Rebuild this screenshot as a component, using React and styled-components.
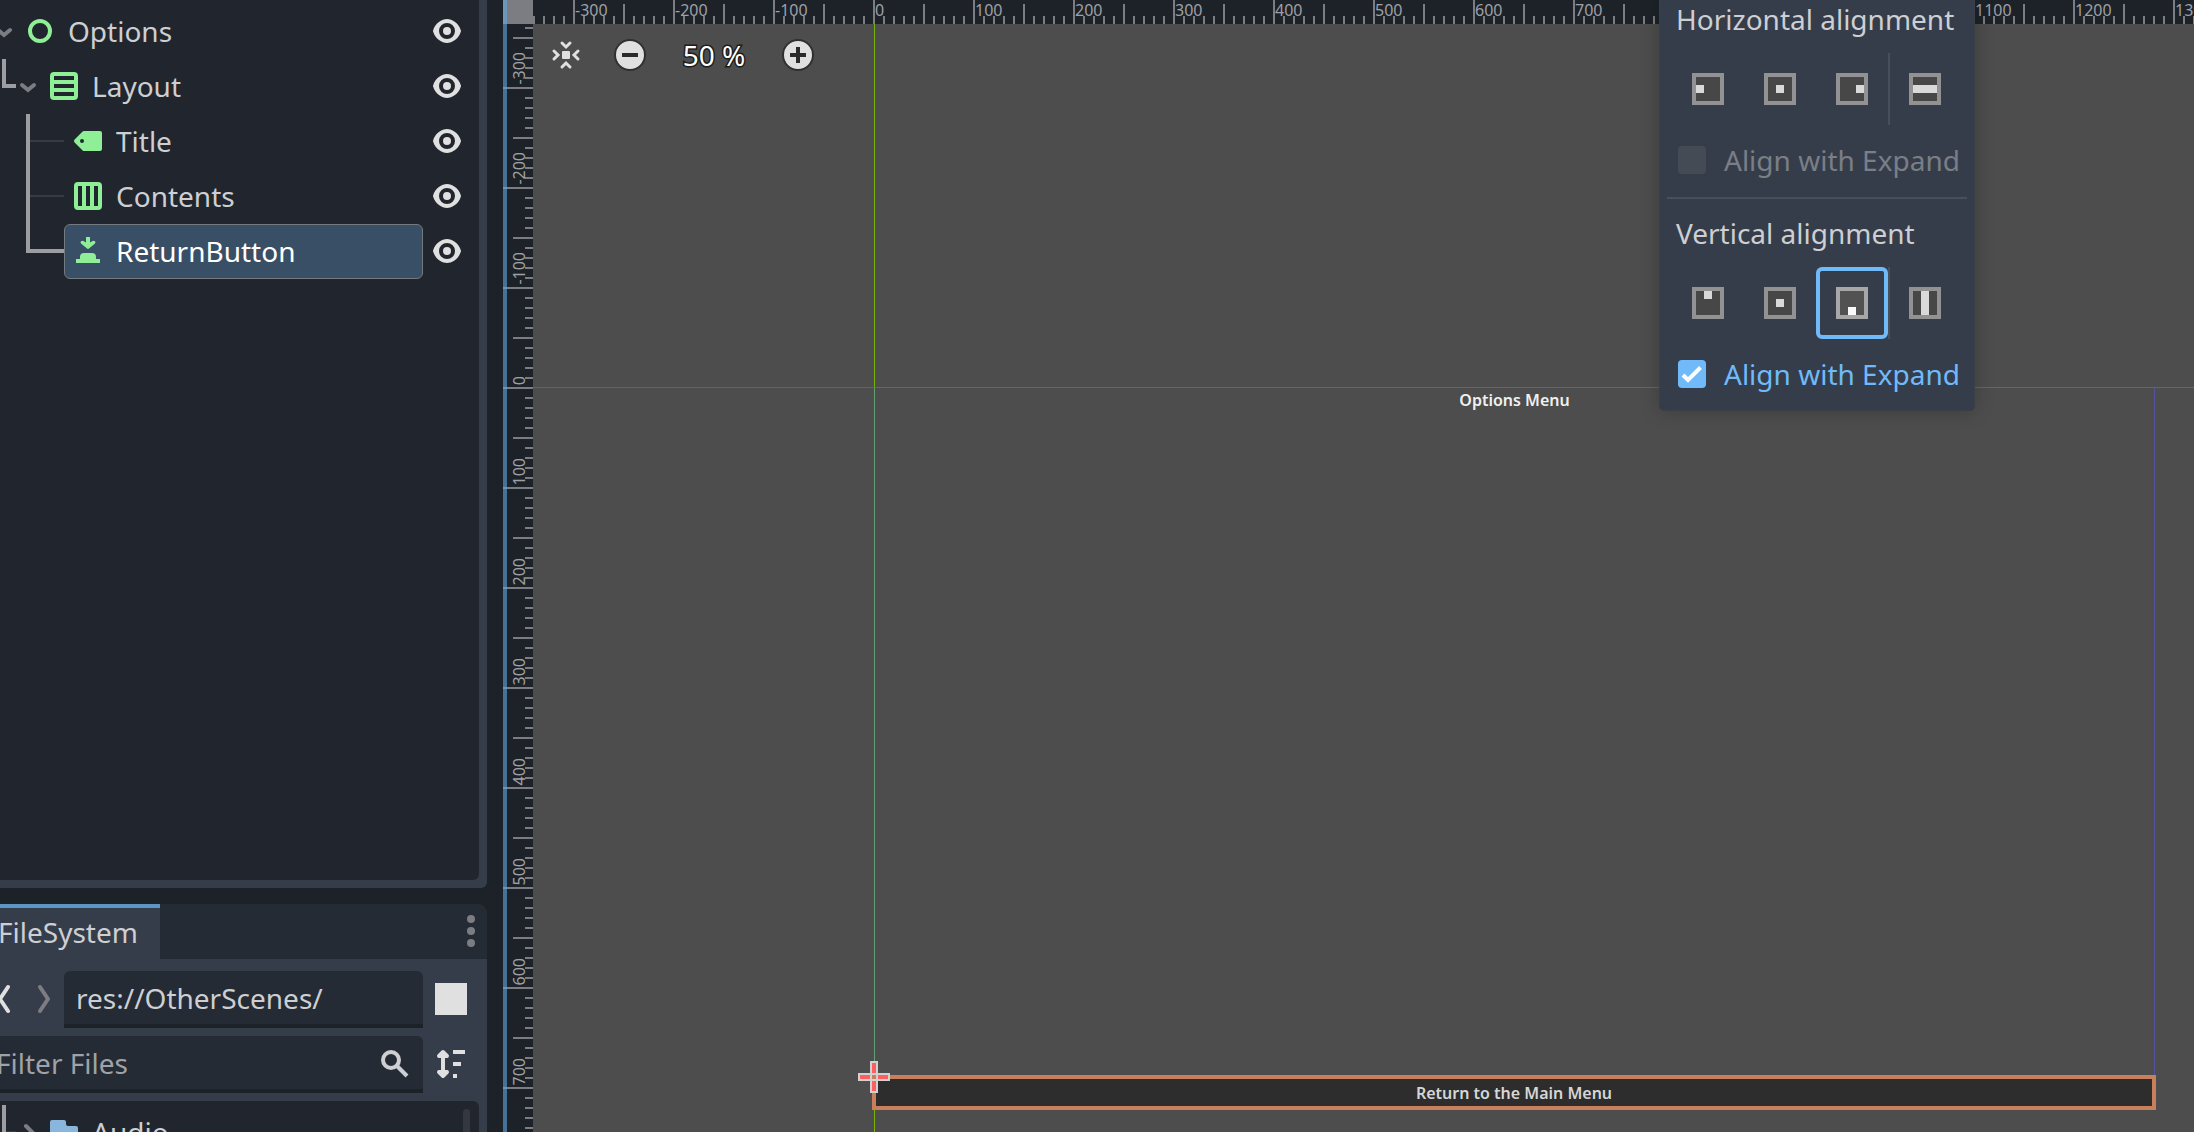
import React from "react";
import styled, { createGlobalStyle, css } from "styled-components";

const color = {
  base: "#363d4a",
  dark: "#1d2229",
  panel: "#21262e",
  field: "#252b34",
  text: "#cdcfd2",
  muted: "#7b7d82",
  icon: "#e0e0e0",
  green: "#8eef97",
  accent: "#70bafa",
  line: "#9c9ea3",
  thin: "#373c44",
};

const GlobalStyle = createGlobalStyle`
  * { box-sizing: border-box; }
  body {
    margin: 0;
    overflow: hidden;
    background: ${color.dark};
    color: ${color.text};
    font: 28px/38px "Noto Sans", sans-serif;
  }
  button, input { font: inherit; color: inherit; }
  svg { display: block; flex: none; }
`;

const Editor = styled.div`
  display: flex;
  height: 100vh;
  overflow: hidden;
`;

const Docks = styled.aside`
  display: grid;
  grid-template-rows: minmax(0, 1fr) 228px;
  gap: 16px;
  flex: none;
  width: 513px;
  margin-left: -26px;
`;

const SceneDock = styled.section`
  display: flex;
  padding: 0 8px 8px 0;
  background: ${color.base};
  border-radius: 0 0 6px 0;
`;

const Tree = styled.ul`
  flex: 1;
  margin: 0;
  padding: 4px 8px 0 0;
  list-style: none;
  background: ${color.panel};
  border-radius: ${(p) => (p.$roundTop ? "0 6px 0 0" : "0 0 6px 0")};
`;

const TreeRow = styled.li`
  display: flex;
  height: 55px;
  padding-left: ${(p) => [18, 28, 52][p.$level]}px;
`;

const thickTrunk = (end) =>
  `linear-gradient(${color.line}, ${color.line}) 0 0 / 4px ${end} no-repeat`;
const branch = (tone, top, size) =>
  `linear-gradient(${tone}, ${tone}) 0 ${top} / 100% ${size} no-repeat`;

const Guide = styled.span`
  flex: none;
  width: ${(p) => (p.$wide ? 38 : 14)}px;
  background: ${(p) =>
    p.$last
      ? `${thickTrunk("29px")}, ${branch(color.line, "25px", "4px")}`
      : `${thickTrunk("100%")}, ${branch(color.thin, "26px", "2px")}`};
`;

const PlainButton = styled.button`
  display: flex;
  align-items: center;
  justify-content: center;
  flex: none;
  padding: 0;
  border: 0;
  background: none;
`;

const Fold = styled(PlainButton)`
  width: 24px;
  height: 54px;
`;

const Item = styled.button`
  display: flex;
  flex: 1;
  align-items: center;
  gap: 12px;
  min-width: 0;
  padding: 7px 7px 8px;
  border: 1px solid transparent;
  border-radius: 6px;
  background: none;
  text-align: left;
  ${(p) =>
    p.$selected &&
    css`
      background: #394f66;
      border-color: #74787f;
      color: #fff;
    `}
`;

const EyeButton = styled(PlainButton)`
  width: 48px;
  height: 54px;
`;

const FileDock = styled.section`
  display: flex;
  flex-direction: column;
  overflow: hidden;
  background: ${color.base};
  border-radius: 0 10px 0 0;
`;

const TabBar = styled.div`
  display: flex;
  justify-content: space-between;
  background: ${color.field};
`;

const Tab = styled.button`
  height: 55px;
  padding: 3px 22px 6px 24px;
  border: 0;
  border-top: 4px solid #5b94c7;
  background: ${color.base};
`;

const MenuButton = styled(PlainButton)`
  width: 32px;
  height: 54px;
`;

const DockBody = styled.div`
  display: flex;
  flex-direction: column;
  flex: 1;
  gap: 8px;
  min-height: 0;
  padding: 12px 8px 0 10px;
`;

const FieldRow = styled.div`
  display: flex;
  flex: none;
`;

const NavButton = styled(PlainButton)`
  width: 40px;
  height: 56px;
`;

const SideButton = styled(PlainButton)`
  width: 56px;
  height: 56px;
`;

const Field = styled.label`
  display: flex;
  flex: 1;
  align-items: flex-start;
  min-width: 0;
  padding: 0 12px;
  background: ${color.field};
  border-bottom: 4px solid ${color.dark};
  border-radius: 6px 6px 0 0;
  svg {
    margin-top: 12px;
  }
`;

const TextInput = styled.input`
  flex: 1;
  min-width: 0;
  height: 53px;
  padding: 0;
  border: 0;
  outline: 0;
  background: none;
  &::placeholder {
    color: #9fa2a6;
    opacity: 1;
  }
`;

const Square = styled.span`
  width: 32px;
  height: 32px;
  background: ${color.icon};
`;

const FileSlot = styled.div`
  display: flex;
  flex: none;
  height: 31px;
  padding-right: 8px;
`;

const FileList = styled.div`
  display: flex;
  flex: 1;
  min-height: 0;
  overflow: hidden;
  background: ${color.panel};
  border-radius: 0 6px 0 0;
`;

const ScrollThumb = styled.span`
  flex: none;
  width: 7px;
  margin: 8px 9px 0 0;
  border-radius: 4px 4px 0 0;
  background: #34373e;
`;

/* The viewport: two rulers around the canvas */

const View = styled.main`
  display: grid;
  flex: 1;
  grid-template: 24px minmax(0, 1fr) / 30px minmax(0, 1fr);
  min-width: 0;
  margin-left: 16px;
  position: relative;
`;

const FocusEdge = styled.span`
  position: absolute;
  inset: 0 auto 0 0;
  width: 4px;
  background: rgba(98, 168, 229, 0.6);
`;

const Corner = styled.div`
  background: ${color.muted};
`;

const bar = (size, pos) =>
  `linear-gradient(${color.muted}, ${color.muted}) ${pos} / ${size} no-repeat`;

const TopRuler = styled.div`
  display: flex;
  overflow: hidden;
  background: ${color.dark};
  font-size: 16px;
  line-height: 20px;
  color: #9da0a4;
`;

const TopMark = styled.span`
  flex: none;
  width: 100px;
  height: 24px;
  padding-left: 2px;
  background: ${bar("2px 24px", "0 0")}, ${bar("2px 20px", "50px 4px")},
    linear-gradient(90deg, ${color.muted} 2px, transparent 2px) 0 16px / 10px 8px repeat-x;
  &:first-child {
    margin-left: -60px;
  }
`;

const SideRuler = styled.div`
  display: flex;
  flex-direction: column;
  overflow: hidden;
  background: ${color.dark};
  font-size: 16px;
  line-height: 20px;
  color: #9da0a4;
`;

const SideMark = styled.span`
  display: flex;
  flex: none;
  align-items: flex-end;
  height: 100px;
  padding: 0 0 2px 6px;
  background: ${bar("30px 2px", "0 0")}, ${bar("20px 2px", "10px 50px")},
    linear-gradient(${color.muted} 2px, transparent 2px) 22px 0 / 8px 10px repeat-y;
  &:first-child {
    margin-top: -37px;
  }
`;

const SideLabel = styled.span`
  writing-mode: vertical-rl;
  transform: rotate(180deg);
`;

const Canvas = styled.div`
  position: relative;
  overflow: hidden;
  background: #4d4d4d;
`;

const AxisX = styled.span`
  position: absolute;
  inset: 363px 0 auto;
  height: 1px;
  background: linear-gradient(90deg, #bb3a4b 341px, #dc323f 0);
`;

const AxisY = styled.span`
  position: absolute;
  inset: 0 auto 0 341px;
  width: 1px;
  background: #79b500;
`;

const Stage = styled.div`
  display: flex;
  flex-direction: column;
  justify-content: space-between;
  position: absolute;
  left: 341px;
  top: 363px;
  width: 1281px;
  height: 721px;
  padding-top: 1px;
  border: 1px solid #9c4390;
  border-left-color: #629f74;
  border-right-color: #5252a0;
  border-bottom: 0;
  font: 600 16px/22px "Noto Sans", sans-serif;
  text-align: center;
`;

const StageTitle = styled.span`
  color: #f0f0f0;
`;

const StageButton = styled.button`
  height: 35px;
  margin: 0 -2px -2px -3px;
  padding: 2px 0;
  border: 4px solid #c87f5c;
  background: #2d2d2d;
  color: #d6d6d6;
`;

const Handle = styled.svg`
  position: absolute;
  left: 325px;
  top: 1037px;
`;

const ZoomBar = styled.div`
  display: flex;
  align-items: center;
  position: absolute;
  left: 1px;
  top: 11px;
  height: 40px;
`;

const ZoomButton = styled(PlainButton)`
  width: 64px;
  height: 40px;
`;

const ZoomValue = styled(PlainButton)`
  width: 104px;
  height: 38px;
  color: #fff;
  -webkit-text-stroke: 3px #1c1c1c;
  paint-order: stroke fill;
`;

/* Alignment popup */

const Popup = styled.div`
  position: absolute;
  top: 0;
  right: 220px;
  width: 314px;
  padding-bottom: 17px;
  border-radius: 0 0 4px 4px;
  background: ${color.base};
  box-shadow: 0 0 0 1px #3a3f48, 0 0 20px rgba(0, 0, 0, 0.25);
`;

const Heading = styled.h2`
  margin: 0;
  padding: 0 16px;
  font: inherit;
  white-space: nowrap;
`;

const AlignRow = styled.div`
  display: flex;
  padding: 15px 12px 16px;
`;

const AlignButton = styled(PlainButton)`
  width: 72px;
  height: 72px;
  border-radius: 6px;
  ${(p) => p.$active && `border: 4px solid ${color.accent};`}
`;

const VLine = styled.span`
  width: 2px;
  margin-right: -1px;
  background: #484f5c;
`;

const HLine = styled.hr`
  height: 2px;
  margin: 18px 7px 15px;
  border: 0;
  background: #484f5c;
`;

const CheckLabel = styled.label`
  display: flex;
  align-items: center;
  gap: 18px;
  padding: 0 18px;
  white-space: nowrap;
  color: ${(p) => (p.$on ? color.accent : "#7a7e87")};
`;

const CheckBox = styled.span`
  display: grid;
  width: 28px;
  height: 28px;
  > * {
    grid-area: 1 / 1;
  }
`;

const CheckInput = styled.input`
  appearance: none;
  width: 28px;
  height: 28px;
  margin: 0;
  border-radius: 4px;
  background: #444b54;
  &:checked {
    background: ${color.accent};
  }
`;

/* Icons, drawn on a 16-unit grid */

const Icon = ({ children, fill = color.icon, size = 32 }) => (
  <svg width={size} height={size} viewBox="0 0 16 16" fill={fill} aria-hidden="true">
    {children}
  </svg>
);

const Eye = () => (
  <Icon>
    <path d="M8 2C5.443 2.01 2.134 4.06 1.045 7.7a1 1 0 0 0 0 .6C2.163 12.03 5.5 13.99 8 14c2.5-.01 5.837-1.97 6.955-5.7a1 1 0 0 0 0-.59C13.875 4.06 10.557 2.01 8 2zm0 2a4 4 0 1 1 0 8 4 4 0 0 1 0-8zm0 2a2 2 0 1 0 0 4 2 2 0 0 0 0-4z" />
  </Icon>
);

const nodeIcons = {
  control: (
    <Icon fill="none">
      <circle cx="8" cy="8" r="5" stroke={color.green} strokeWidth="2" />
    </Icon>
  ),
  vbox: (
    <Icon fill={color.green}>
      <path
        fillRule="evenodd"
        d="M3 1h10a2 2 0 0 1 2 2v10a2 2 0 0 1-2 2H3a2 2 0 0 1-2-2V3a2 2 0 0 1 2-2zm0 2v2h10V3zm0 4v2h10V7zm0 4v2h10v-2z"
      />
    </Icon>
  ),
  label: (
    <Icon fill={color.green}>
      <path
        fillRule="evenodd"
        d="M6 3a1 1 0 0 0-.7.3l-4 4a1 1 0 0 0 0 1.4l4 4a1 1 0 0 0 .7.3h8a1 1 0 0 0 1-1V4a1 1 0 0 0-1-1zM5 7a1 1 0 1 1 0 2 1 1 0 0 1 0-2z"
      />
    </Icon>
  ),
  hbox: (
    <Icon fill={color.green}>
      <path
        fillRule="evenodd"
        d="M3 1h10a2 2 0 0 1 2 2v10a2 2 0 0 1-2 2H3a2 2 0 0 1-2-2V3a2 2 0 0 1 2-2zm0 2v10h2V3zm4 0v10h2V3zm4 0v10h2V3z"
      />
    </Icon>
  ),
  button: (
    <Icon fill={color.green}>
      <path d="M7 1h2v2.8l1.3-.8a.9.9 0 0 1 1.2 1.3L8.500 6.800a.8.8 0 0 1-1 0L4.500 4.300A.9.9 0 0 1 5.700 3L7 3.800zM6 9h4a2 2 0 0 1 2 2v1h2v2H2v-2h2v-1a2 2 0 0 1 2-2z" />
    </Icon>
  ),
  folder: (
    <Icon fill="#88b6dd">
      <path d="M2 2h6a1 1 0 0 1 1 1v1a1 1 0 0 0 1 1h4a1 1 0 0 1 1 1v7a1 1 0 0 1-1 1H2a1 1 0 0 1-1-1V3a1 1 0 0 1 1-1z" />
    </Icon>
  ),
};

const FoldArrow = ({ closed }) => (
  <svg width="24" height="24" viewBox="0 0 24 24" fill="none" stroke={color.muted} strokeWidth="4" strokeLinecap="round" aria-hidden="true">
    <path d={closed ? "M10 6l6 6-6 6" : "M6 11l6 5 6-5"} />
  </svg>
);

const NavArrow = ({ forward }) => (
  <svg width="16" height="32" viewBox="0 0 16 32" fill="none" stroke={forward ? color.muted : color.icon} strokeWidth="4" strokeLinecap="round" strokeLinejoin="round" aria-hidden="true">
    <path d={forward ? "M4 4l8 12-8 12" : "M12 4L4 16l8 12"} />
  </svg>
);

const dots = {
  left: [4, 12, 8, 8],
  center: [12, 12, 8, 8],
  right: [20, 12, 8, 8],
  hfill: [4, 12, 24, 8],
  top: [12, 4, 8, 8],
  bottom: [12, 20, 8, 8],
  vfill: [12, 4, 8, 24],
};

const AlignIcon = ({ kind, active }) => {
  const [x, y, w, h] = dots[kind];
  return (
    <svg width="32" height="32" viewBox="0 0 32 32" aria-hidden="true">
      <rect width="32" height="32" fill={active ? "#a7a7a7" : "#929292"} />
      <rect x="4" y="4" width="24" height="24" fill={active ? "#525252" : "#474747"} />
      <rect x={x} y={y} width={w} height={h} fill={active ? "#fafafa" : "#d9d9d9"} />
    </svg>
  );
};

const RoundSign = ({ plus }) => (
  <svg width="32" height="32" viewBox="0 0 32 32" aria-hidden="true">
    <circle cx="16" cy="16" r="15" fill={color.icon} stroke="#303030" strokeWidth="2" />
    <path d={plus ? "M8 16h16M16 8v16" : "M8 16h16"} stroke="#2b2b2b" strokeWidth="4" />
  </svg>
);

const sceneNodes = [
  { name: "Options", icon: "control", level: 0, folds: true },
  { name: "Layout", icon: "vbox", level: 1, folds: true, last: true },
  { name: "Title", icon: "label", level: 2 },
  { name: "Contents", icon: "hbox", level: 2 },
  { name: "ReturnButton", icon: "button", level: 2, last: true, selected: true },
];

const Node = ({ node }) => (
  <TreeRow $level={node.level}>
    {node.level > 0 && <Guide $wide={node.level > 1} $last={node.last} />}
    {node.folds && (
      <Fold aria-label={`Fold ${node.name}`}>
        <FoldArrow closed={node.closed} />
      </Fold>
    )}
    <Item $selected={node.selected}>
      {nodeIcons[node.icon]}
      {node.name}
    </Item>
    {!node.closed && (
      <EyeButton aria-label={`Toggle ${node.name}`}>
        <Eye />
      </EyeButton>
    )}
  </TreeRow>
);

const AlignSection = ({ title, kinds, active, checked }) => (
  <section>
    <Heading>{title}</Heading>
    <AlignRow>
      {kinds.map((kind, i) => (
        <React.Fragment key={kind}>
          {i === 3 && <VLine />}
          <AlignButton aria-label={kind} $active={kind === active}>
            <AlignIcon kind={kind} active={kind === active} />
          </AlignButton>
        </React.Fragment>
      ))}
    </AlignRow>
    <CheckLabel $on={checked}>
      <CheckBox>
        <CheckInput type="checkbox" defaultChecked={checked} disabled={!checked} />
        {checked && (
          <svg width="28" height="28" viewBox="0 0 28 28" fill="none" stroke="#fff" strokeWidth="4" pointerEvents="none" aria-hidden="true">
            <path d="M5 15l5 5L22.500 7.500" />
          </svg>
        )}
      </CheckBox>
      Align with Expand
    </CheckLabel>
  </section>
);

const marks = (from, count) => Array.from({ length: count }, (_, i) => from + i * 100);

export default function App() {
  return (
    <Editor>
      <GlobalStyle />
      <Docks>
        <SceneDock>
          <Tree>
            {sceneNodes.map((n) => (
              <Node key={n.name} node={n} />
            ))}
          </Tree>
        </SceneDock>
        <FileDock>
          <TabBar>
            <Tab>FileSystem</Tab>
            <MenuButton aria-label="Dock menu">
              <svg width="32" height="32" viewBox="0 0 32 32" fill={color.muted} aria-hidden="true">
                <circle cx="16" cy="4" r="4" />
                <circle cx="16" cy="16" r="4" />
                <circle cx="16" cy="28" r="4" />
              </svg>
            </MenuButton>
          </TabBar>
          <DockBody>
            <FieldRow>
              <NavButton aria-label="Back">
                <NavArrow />
              </NavButton>
              <NavButton aria-label="Forward">
                <NavArrow forward />
              </NavButton>
              <Field>
                <TextInput aria-label="Path" defaultValue="res://OtherScenes/" />
              </Field>
              <SideButton aria-label="Split mode">
                <Square />
              </SideButton>
            </FieldRow>
            <FieldRow>
              <Field>
                <TextInput aria-label="Filter files" placeholder="Filter Files" />
                <Icon fill="none">
                  <circle cx="6" cy="6" r="4" stroke={color.text} strokeWidth="2" />
                  <path d="M9 9l5 5" stroke={color.text} strokeWidth="2" />
                </Icon>
              </Field>
              <SideButton aria-label="Sort files">
                <Icon>
                  <path d="M4 1a1 1 0 0 0-.7.3l-2 2a1 1 0 0 0 .7 1.700h1v6H2a1 1 0 0 0-.7 1.700l2 2a1 1 0 0 0 1.400 0l2-2A1 1 0 0 0 6 11H5V5h1a1 1 0 0 0 .7-1.700l-2-2A1 1 0 0 0 4 1zM9 1h6v2H9zM9 7h4v2H9zM9 13h2v2H9z" />
                </Icon>
              </SideButton>
            </FieldRow>
          </DockBody>
          <FileSlot>
            <FileList>
              <Tree $roundTop>
                <Node node={{ name: "Audio", icon: "folder", level: 1, folds: true, closed: true }} />
              </Tree>
              <ScrollThumb />
            </FileList>
          </FileSlot>
        </FileDock>
      </Docks>
      <View>
        <Corner />
        <TopRuler>
          {marks(-400, 18).map((m) => (
            <TopMark key={m}>{m}</TopMark>
          ))}
        </TopRuler>
        <SideRuler>
          {marks(-300, 12).map((m) => (
            <SideMark key={m}>
              <SideLabel>{m}</SideLabel>
            </SideMark>
          ))}
        </SideRuler>
        <Canvas>
          <AxisX />
          <AxisY />
          <Stage>
            <StageTitle>Options Menu</StageTitle>
            <StageButton>Return to the Main Menu</StageButton>
          </Stage>
          <Handle width="32" height="32" viewBox="0 0 32 32" aria-hidden="true">
            <path d="M12 0h8v12h12v8H20v12h-8V20H0v-8h12z" fill="#d2d2d2" />
            <path d="M14 2h4v10h-4zM14 20h4v10h-4zM2 14h10v4H2zM20 14h10v4H20z" fill="#ff5f5f" />
            <path d="M14 14h4v4h-4z" fill="#c87f5c" />
          </Handle>
          <ZoomBar>
            <ZoomButton aria-label="Center view">
              <svg width="32" height="32" viewBox="0 0 32 32" fill="none" stroke={color.icon} strokeWidth="3" strokeLinecap="round" aria-hidden="true">
                <rect x="12" y="12" width="8" height="8" rx="1" fill={color.icon} stroke="none" />
                <path d="M12 4l4 4 4-4M12 28l4-4 4 4M4 12l4 4-4 4M28 12l-4 4 4 4" />
              </svg>
            </ZoomButton>
            <ZoomButton aria-label="Zoom out">
              <RoundSign />
            </ZoomButton>
            <ZoomValue>50 %</ZoomValue>
            <ZoomButton aria-label="Zoom in">
              <RoundSign plus />
            </ZoomButton>
          </ZoomBar>
        </Canvas>
        <FocusEdge />
        <Popup>
          <AlignSection title="Horizontal alignment" kinds={["left", "center", "right", "hfill"]} checked={false} />
          <HLine />
          <AlignSection title="Vertical alignment" kinds={["top", "center", "bottom", "vfill"]} active="bottom" checked />
        </Popup>
      </View>
    </Editor>
  );
}
